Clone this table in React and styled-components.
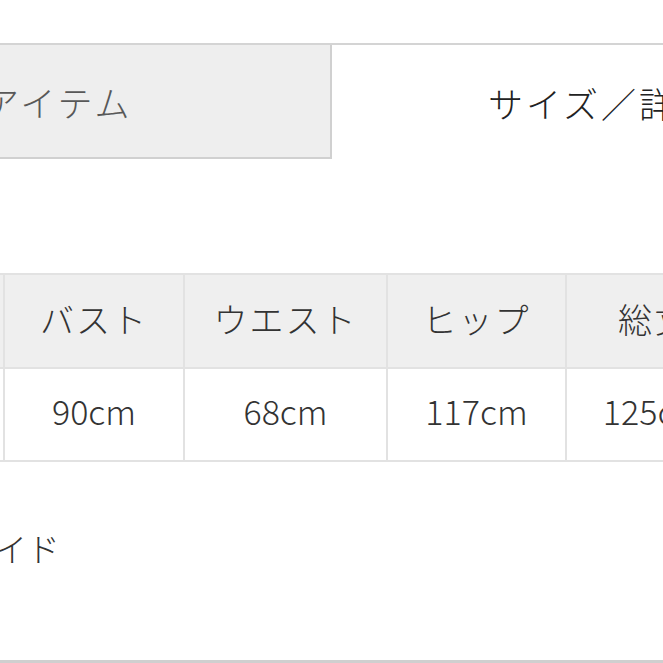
import React from 'react';
import styled, { createGlobalStyle } from 'styled-components';

const GlobalStyle = createGlobalStyle`
  html, body {
    margin: 0;
    padding: 0;
    background: #ffffff;
    overflow: hidden;
  }
  body {
    font-family: "Noto Sans CJK JP", "Noto Sans", sans-serif;
    font-weight: 300;
    color: #333333;
  }
`;

const Page = styled.div`
  width: 663px;
  height: 663px;
  overflow: hidden;
  display: flex;
  flex-direction: column;
`;

const TabBar = styled.div`
  margin-top: 43px;
  display: flex;
  border-top: 2px solid #d4d4d4;
  height: 114px;
`;

const Tab = styled.div`
  display: flex;
  align-items: center;
  box-sizing: border-box;
  white-space: nowrap;
  overflow: hidden;
  font-size: 35px;
  letter-spacing: 3px;
  ${p => p.active ? `
    flex: 1;
    color: #222222;
    background: #ffffff;
    padding-left: 156px;
  ` : `
    width: 332px;
    color: #585858;
    background: #eeeeee;
    border-right: 2px solid #d0d0d0;
    border-bottom: 2px solid #d0d0d0;
  `}
`;

const TabLabel = styled.span`
  margin-left: ${p => p.offset}px;
`;

const SizeGrid = styled.div`
  margin-top: 114px;
  margin-left: -100px;
  display: grid;
  grid-template-columns: 103px 178px 201px 177px 174px;
  grid-template-rows: 92px 91px;
  gap: 2px;
  padding: 2px 0;
  background: #e2e2e2;
  width: max-content;
`;

const Cell = styled.div`
  display: flex;
  align-items: center;
  justify-content: center;
  box-sizing: border-box;
  padding-bottom: ${p => (p.head ? '6px' : '8px')};
  white-space: nowrap;
  overflow: hidden;
  font-size: 34px;
  color: #333333;
  background: ${p => (p.head ? '#efefef' : '#ffffff')};
  letter-spacing: ${p => (p.head ? '2px' : '0')};
`;

const Guide = styled.div`
  margin-top: 62px;
  margin-left: ${p => p.offset}px;
  font-size: 33px;
  color: #333333;
  white-space: nowrap;
`;

const Spacer = styled.div`
  flex: 1;
`;

const BottomRule = styled.div`
  height: 3px;
  background: #cfcfcf;
`;

const headers = ['着丈', 'バスト', 'ウエスト', 'ヒップ', '総丈'];
const values = ['', '90cm', '68cm', '117cm', '125cm'];

export default function App() {
  return (
    <Page>
      <GlobalStyle />
      <TabBar>
        <Tab>
          <TabLabel offset={-16}>アイテム</TabLabel>
        </Tab>
        <Tab active>
          <TabLabel offset={0}>サイズ／詳細</TabLabel>
        </Tab>
      </TabBar>
      <SizeGrid>
        {headers.map(h => <Cell head key={h}>{h}</Cell>)}
        {values.map((v, i) => <Cell key={i}>{v}</Cell>)}
      </SizeGrid>
      <Guide offset={-137}>サイズガイド</Guide>
      <Spacer />
      <BottomRule />
    </Page>
  );
}
